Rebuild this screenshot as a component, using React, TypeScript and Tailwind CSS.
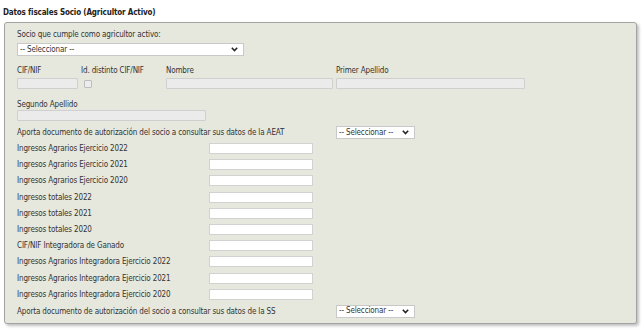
import React from "react";

const font = { fontFamily: '"DejaVu Sans Condensed", "DejaVu Sans", sans-serif' };

function Chevron() {
  return (
    <svg width="7" height="5" viewBox="0 0 7 5" className="shrink-0">
      <path d="M0.8 0.8 L3.5 3.6 L6.2 0.8" fill="none" stroke="#222" strokeWidth="1.5" />
    </svg>
  );
}

function FakeSelect({ w }: { w: string }) {
  return (
    <div className={`${w} h-[13px] bg-white border border-[#c9c9c9] flex items-center justify-between pl-[2px] pr-[5px] text-[#333] whitespace-nowrap`}>
      <span className="leading-none">-- Seleccionar --</span>
      <Chevron />
    </div>
  );
}

function TextInput() {
  return <div className="w-[104px] h-[11px] bg-white border border-[#d2d2d2]" />;
}

function DisabledInput({ w }: { w: string }) {
  return <div className={`${w} h-[11px] bg-[#ebebeb] border border-[#cfcfcf] rounded-[1px]`} />;
}

const rows = [
  "Ingresos Agrarios Ejercicio 2022",
  "Ingresos Agrarios Ejercicio 2021",
  "Ingresos Agrarios Ejercicio 2020",
  "Ingresos totales 2022",
  "Ingresos totales 2021",
  "Ingresos totales 2020",
  "CIF/NIF Integradora de Ganado",
  "Ingresos Agrarios Integradora Ejercicio 2022",
  "Ingresos Agrarios Integradora Ejercicio 2021",
  "Ingresos Agrarios Integradora Ejercicio 2020",
];

export default function App() {
  return (
    <div className="w-[643px] h-[329px] bg-white text-[8px] tracking-[-0.15px] text-[#333] leading-[11px] overflow-hidden" style={font}>
      <div className="pl-[3px] pt-[7px] h-[22px] font-bold text-[#222]">
        Datos fiscales Socio (Agricultor Activo)
      </div>
      <div className="ml-[4px] w-[633px] h-[302px] bg-[#e6e8de] border border-[#a3a3a3] rounded-[3px] shadow-[2px_2px_3px_rgba(0,0,0,0.25)] pl-[12px] pt-[6px] flex flex-col">
        <div>Socio que cumple como agricultor activo:</div>
        <div className="mt-[3px]">
          <FakeSelect w="w-[227px]" />
        </div>
        <div className="mt-[9px] flex">
          <div className="w-[64px]">
            <div>CIF/NIF</div>
            <div className="mt-[2px]"><DisabledInput w="w-[61px]" /></div>
          </div>
          <div className="w-[85px]">
            <div>Id. distinto CIF/NIF</div>
            <div className="mt-[4px] ml-[3px] w-[8px] h-[8px] border border-[#bdbdbd] bg-[#ececec] rounded-[1px]" />
          </div>
          <div className="w-[170px]">
            <div>Nombre</div>
            <div className="mt-[2px]"><DisabledInput w="w-[167px]" /></div>
          </div>
          <div className="w-[189px]">
            <div>Primer Apellido</div>
            <div className="mt-[2px]"><DisabledInput w="w-[189px]" /></div>
          </div>
        </div>
        <div className="mt-[10px]">Segundo Apellido</div>
        <div><DisabledInput w="w-[189px]" /></div>
        <div className="mt-[5px] flex items-center h-[13px]">
          <div className="w-[319px]">Aporta documento de autorización del socio a consultar sus datos de la AEAT</div>
          <FakeSelect w="w-[79px]" />
        </div>
        <div className="mt-[4px] flex flex-col gap-[5.2px]">
          {rows.map((r) => (
            <div key={r} className="flex items-center h-[11px]">
              <div className="w-[192px]">{r}</div>
              <TextInput />
            </div>
          ))}
        </div>
        <div className="mt-[5px] flex items-center h-[13px]">
          <div className="w-[319px]">Aporta documento de autorización del socio a consultar sus datos de la SS</div>
          <FakeSelect w="w-[79px]" />
        </div>
      </div>
    </div>
  );
}
